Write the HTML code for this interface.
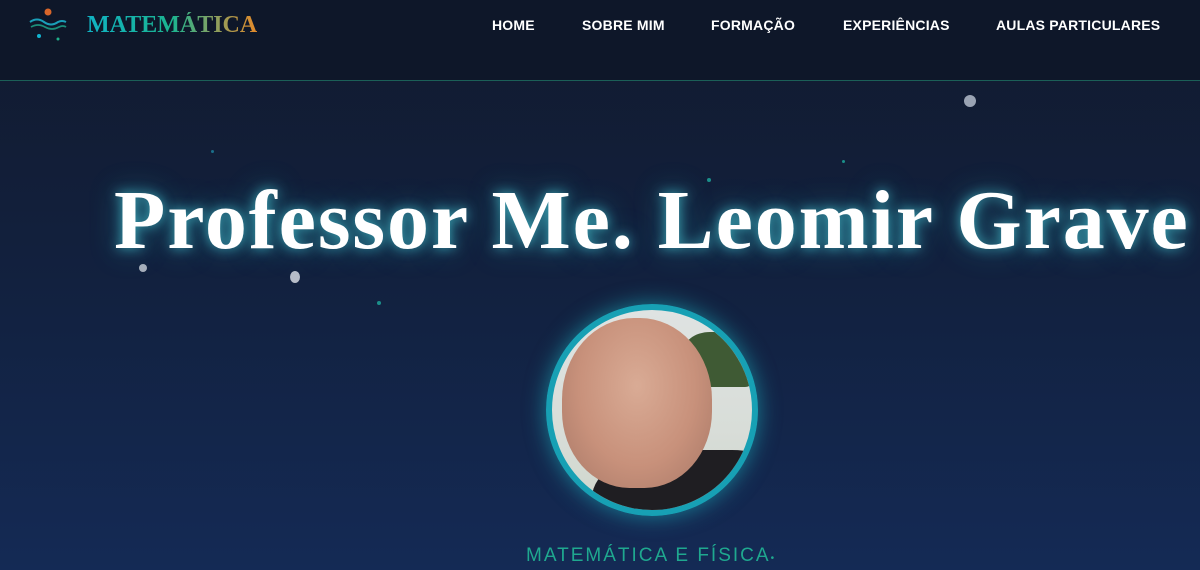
<!DOCTYPE html>
<html><head><meta charset="utf-8"><style>
*{margin:0;padding:0;box-sizing:border-box}
body{width:1200px;height:570px;overflow:hidden;background:linear-gradient(180deg,#111a2e 0%,#12213f 50%,#142a55 100%);font-family:"Liberation Sans",sans-serif;position:relative}
header{position:absolute;left:0;top:0;width:1200px;height:81px;background:#0e1729;border-bottom:1px solid #1b5f57}
.logo{position:absolute;left:87px;top:12px;font-family:"Liberation Serif",serif;font-weight:bold;font-size:24px;letter-spacing:0;background:linear-gradient(90deg,#10b3c4,#1bb38f 50%,#8aa060 75%,#e38a2a);-webkit-background-clip:text;background-clip:text;color:transparent}
nav a{position:absolute;top:17px;color:#fff;font-size:14px;font-weight:bold;letter-spacing:0.2px;text-decoration:none}
h1{position:absolute;left:114px;top:172px;font-family:"Liberation Serif",serif;font-weight:bold;font-size:84px;color:#fff;letter-spacing:1.9px;white-space:nowrap;text-shadow:0 0 12px rgba(80,220,230,.7),0 0 30px rgba(40,180,200,.45)}
.ph{position:absolute;left:546px;top:304px;width:212px;height:212px;border-radius:50%;border:6px solid #17a0b4;box-shadow:0 0 22px rgba(30,200,210,.55);overflow:hidden;background:linear-gradient(180deg,#dfe3e2 0%,#d8ddd8 60%,#cfd6cc 100%)}
.tree{position:absolute;right:0;top:22px;width:70px;height:55px;background:#3f5a34;border-radius:40% 20% 10% 30%}
.face{position:absolute;left:10px;top:8px;width:150px;height:170px;border-radius:48% 48% 45% 45%;background:radial-gradient(ellipse at 50% 40%,#d9ab95 0%,#c8917b 55%,#a67766 100%)}
.coat{position:absolute;left:40px;top:140px;width:200px;height:120px;background:#1f1e22;border-radius:40% 30% 0 0}
.sub{position:absolute;left:526px;top:545px;color:#1fa88f;font-size:19px;letter-spacing:2px}
.dot{position:absolute;border-radius:50%}
</style></head><body>
<header>
<svg style="position:absolute;left:28px;top:6px" width="42" height="36" viewBox="0 0 42 36">
<circle cx="20" cy="6" r="3.5" fill="#d9662a"/>
<path d="M2 16 Q9 11 16 16 T30 16 Q34 14 38 16" stroke="#1a9fb8" stroke-width="2" fill="none"/>
<path d="M3 21 Q10 17 17 21 T31 21 Q35 19 38 21" stroke="#1b8f7a" stroke-width="1.8" fill="none"/>
<circle cx="11" cy="30" r="2" fill="#12b4d0"/><circle cx="30" cy="33" r="1.5" fill="#1fb08a"/>
</svg>
<div class="logo">MATEMÁTICA</div>
<nav><a style="left:492px">HOME</a><a style="left:582px">SOBRE MIM</a><a style="left:711px">FORMAÇÃO</a><a style="left:843px">EXPERIÊNCIAS</a><a style="left:996px">AULAS PARTICULARES</a></nav>
</header>
<div class="dot" style="left:964px;top:95px;width:12px;height:12px;background:#9aa3b3"></div>
<div class="dot" style="left:139px;top:264px;width:8px;height:8px;background:#a8afbb"></div>
<div class="dot" style="left:290px;top:271px;width:10px;height:12px;background:#b7bdc8"></div>
<div class="dot" style="left:707px;top:178px;width:4px;height:4px;background:#1b8f8a"></div>
<div class="dot" style="left:842px;top:160px;width:3px;height:3px;background:#1b8f8a"></div>
<div class="dot" style="left:377px;top:301px;width:4px;height:4px;background:#1b8f8a"></div>
<div class="dot" style="left:211px;top:150px;width:3px;height:3px;background:#1b6f8a"></div>
<h1>Professor Me. Leomir Grave</h1>
<div class="ph"><div class="tree"></div><div class="coat"></div><div class="face"></div></div>
<div class="sub">MATEMÁTICA E FÍSICA<span style="font-size:10px">•</span></div>
</body></html>
